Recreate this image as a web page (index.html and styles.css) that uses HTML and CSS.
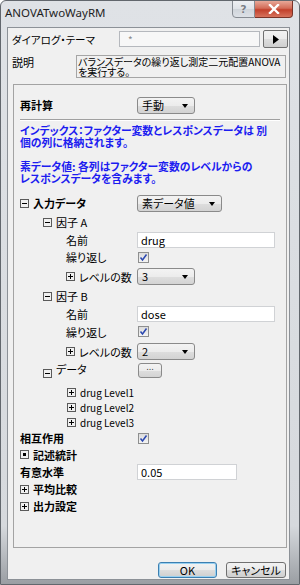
FILE: index.html
```html
<!DOCTYPE html>
<html lang="ja">
<head>
  <meta charset="UTF-8">
  <meta name="viewport" content="width=device-width, initial-scale=1.0">
  <title>ANOVATwoWayRM</title>
  <link rel="stylesheet" href="styles.css">
</head>
<body>
  <div class="window">
    <div class="titlebar">
      <span class="title">ANOVATwoWayRM</span>
      <div class="caption-buttons">
        <span class="cap-btn help">?</span>
        <span class="cap-btn close">
          <svg width="12" height="10" viewBox="0 0 12 10"><path d="M2 1 L10 9 M10 1 L2 9" stroke="#fff" stroke-width="2.4" stroke-linecap="square"/></svg>
        </span>
      </div>
    </div>

    <div class="client">
      <div class="theme-row">
        <span class="theme-label">ダイアログ・テーマ</span>
        <div class="theme-input">*</div>
        <button class="theme-btn">
          <svg width="8" height="9" viewBox="0 0 8 9"><path d="M1 0 L7 4.5 L1 9 Z" fill="#000"/></svg>
        </button>
      </div>

      <div class="desc-row">
        <span class="desc-label">説明</span>
        <div class="desc-box">バランスデータの繰り返し測定二元配置ANOVA<br>を実行する。</div>
      </div>

      <div class="panel">
        <div class="prop-row recalc">
          <span class="lbl lvl0 bold">再計算</span>
          <div class="ctl"><div class="combo w58">手動<i class="arrow"></i></div></div>
        </div>
        <div class="sep"></div>
        <p class="note">インデックス：ファクター変数とレスポンスデータは 別<br>個の列に格納されます。<br><br>素データ値: 各列はファクター変数のレベルからの<br>レスポンスデータを含みます。</p>

        <div class="tree">
          <span class="lbl lvl0 bold"><i class="tw minus"></i>入力データ</span>
          <div class="ctl"><div class="combo w85">素データ値<i class="arrow"></i></div></div>

          <span class="lbl lvl1"><i class="tw minus"></i>因子 A</span>
          <div class="ctl"></div>

          <span class="lbl lvl2">名前</span>
          <div class="ctl"><div class="textbox w138">drug</div></div>

          <span class="lbl lvl2">繰り返し</span>
          <div class="ctl"><span class="check"><svg width="9" height="9" viewBox="0 0 9 9"><path d="M1.5 4.5 L3.5 7 L7.5 1.5" fill="none" stroke="#2b48b0" stroke-width="1.5"/></svg></span></div>

          <span class="lbl lvl2"><i class="tw plus"></i>レベルの数</span>
          <div class="ctl"><div class="combo w58">3<i class="arrow"></i></div></div>

          <span class="lbl lvl1"><i class="tw minus"></i>因子 B</span>
          <div class="ctl"></div>

          <span class="lbl lvl2">名前</span>
          <div class="ctl"><div class="textbox w138">dose</div></div>

          <span class="lbl lvl2">繰り返し</span>
          <div class="ctl"><span class="check"><svg width="9" height="9" viewBox="0 0 9 9"><path d="M1.5 4.5 L3.5 7 L7.5 1.5" fill="none" stroke="#2b48b0" stroke-width="1.5"/></svg></span></div>

          <span class="lbl lvl2"><i class="tw plus"></i>レベルの数</span>
          <div class="ctl"><div class="combo w58">2<i class="arrow"></i></div></div>

          <span class="lbl lvl1"><i class="tw minus"></i><span class="raise">データ</span></span>
          <div class="ctl"><button class="ellipsis">...</button></div>

          <span class="lbl leaf"><i class="tw plus"></i>drug Level1</span>
          <div class="ctl"></div>

          <span class="lbl leaf"><i class="tw plus"></i>drug Level2</span>
          <div class="ctl"></div>

          <span class="lbl leaf"><i class="tw plus"></i>drug Level3</span>
          <div class="ctl"></div>

          <span class="lbl lvl0 bold">相互作用</span>
          <div class="ctl"><span class="check"><svg width="9" height="9" viewBox="0 0 9 9"><path d="M1.5 4.5 L3.5 7 L7.5 1.5" fill="none" stroke="#2b48b0" stroke-width="1.5"/></svg></span></div>

          <span class="lbl lvl0 bold"><i class="tw dot"></i>記述統計</span>
          <div class="ctl"></div>

          <span class="lbl lvl0 bold">有意水準</span>
          <div class="ctl"><div class="textbox w100">0.05</div></div>

          <span class="lbl lvl0 bold"><i class="tw plus"></i>平均比較</span>
          <div class="ctl"></div>

          <span class="lbl lvl0 bold"><i class="tw plus"></i>出力設定</span>
          <div class="ctl"></div>
        </div>
      </div>

      <div class="dialog-buttons">
        <button class="btn default">OK</button>
        <button class="btn">キャンセル</button>
      </div>
    </div>
  </div>
</body>
</html>
```

FILE: styles.css
```css
body {
  margin: 0;
  background-color: #fff;
  font-family: "Noto Sans CJK JP", sans-serif;
  font-size: 11px;
  font-feature-settings: "palt";
  color: #000;
}
.window {
  width: 300px;
  height: 585px;
  box-sizing: border-box;
  border: 1px solid #62676d;
  border-radius: 6px 6px 0 0;
  background: linear-gradient(#dfe2e6, #d6d9dd 90%, #9a9ea3);
  display: flex;
  flex-direction: column;
  overflow: hidden;
}
.titlebar {
  height: 26px;
  display: flex;
  justify-content: space-between;
  align-items: flex-start;
  padding: 0 6px 0 4px;
}
.title {
  font-family: "Noto Sans", sans-serif;
  font-size: 11.5px;
  line-height: 24px;
  color: #1e1e1e;
}
.caption-buttons {
  display: flex;
  margin-top: -1px;
}
.cap-btn {
  height: 18px;
  box-sizing: border-box;
  display: flex;
  align-items: center;
  justify-content: center;
}
.help {
  width: 23px;
  border: 1px solid #868b92;
  border-radius: 0 0 0 4px;
  background: linear-gradient(#eef0f3, #dfe3e8 50%, #cfd4da 51%, #dde1e6);
  color: #7a7f86;
  font-family: "DejaVu Sans", sans-serif;
  font-weight: bold;
  font-size: 11px;
  text-shadow: 0 0 1px #fff;
}
.close {
  width: 38px;
  border: 1px solid #7a3327;
  border-left: none;
  border-radius: 0 0 4px 0;
  background: linear-gradient(#e8a898, #d36c58 45%, #c2402b 55%, #d7735d);
}
.client {
  flex: 1;
  margin: 0 9px 4px 6px;
  border: 1px solid #8c9197;
  background-color: #f0f0f0;
  display: flex;
  flex-direction: column;
  overflow: hidden;
}
.theme-row {
  display: flex;
  align-items: center;
  height: 18px;
  margin-top: 2px;
}
.theme-label {
  width: 107px;
  padding-left: 4px;
  font-size: 10.5px;
  white-space: nowrap;
}
.theme-input {
  width: 141px;
  height: 16px;
  box-sizing: border-box;
  border: 1px solid #b5b8bd;
  background-color: #f7f7f7;
  color: #8a8a8a;
  padding-left: 8px;
  line-height: 16px;
  font-size: 10px;
}
.theme-btn {
  width: 25px;
  height: 18px;
  margin-left: 3px;
  padding: 0;
  border: 1px solid #707070;
  border-radius: 2px;
  background: linear-gradient(#f2f2f2, #ebebeb 50%, #dddddd 51%, #cfcfcf);
  display: flex;
  align-items: center;
  justify-content: center;
}
.desc-row {
  display: flex;
  margin-top: 7px;
}
.desc-label {
  width: 64px;
  padding: 2px 0 0 4px;
  line-height: 10px;
}
.desc-box {
  width: 210px;
  height: 23px;
  box-sizing: border-box;
  border: 1px solid #a5a5a5;
  padding: 1px 0 0 1px;
  font-size: 10px;
  line-height: 10px;
  white-space: nowrap;
  overflow: hidden;
}
.panel {
  height: 464px;
  box-sizing: border-box;
  margin: 6px 2px 0 5px;
  border: 1px solid #a3a3a3;
}
.prop-row, .tree {
  display: grid;
  grid-template-columns: 123px 1fr;
}
.recalc {
  height: 18px;
  margin-top: 11px;
  align-items: center;
}
.sep {
  height: 0;
  margin: 5px 6px 0;
  border-top: 1px solid #a0a0a0;
  border-bottom: 1px solid #fff;
}
.note {
  margin: 3px 6px 0;
  font-size: 10.8px;
  line-height: 12px;
  color: #1c1cf0;
  font-weight: bold;
  white-space: nowrap;
}
.tree {
  margin-top: 9px;
  grid-template-rows: 20px 18px 17px 18px 21px 18px 17px 19px 21px 22px 16px 15px 15px 16px 17px 17px 18px 16px;
}
.lbl {
  display: flex;
  align-items: center;
  white-space: nowrap;
}
.ctl {
  display: flex;
  align-items: center;
}
.bold {
  font-weight: bold;
}
.lvl0 { padding-left: 6px; }
.lvl1 { padding-left: 29px; }
.lvl2 { padding-left: 52px; }
.leaf {
  padding-left: 53px;
  font-size: 10px;
}
.raise {
  margin-bottom: 8px;
}
.tw {
  width: 9px;
  height: 9px;
  box-sizing: border-box;
  border: 1px solid #5a5a5a;
  margin-right: 4px;
  position: relative;
  flex: none;
}
.tw::before, .tw::after {
  content: "";
  position: absolute;
  background-color: #000;
}
.tw::before {
  left: 1px;
  top: 3px;
  width: 5px;
  height: 1px;
}
.tw.plus::after {
  left: 3px;
  top: 1px;
  width: 1px;
  height: 5px;
}
.tw.dot::before {
  left: 2px;
  top: 2px;
  width: 3px;
  height: 3px;
}
.tw.minus::after {
  display: none;
}
.combo {
  height: 17px;
  box-sizing: border-box;
  border: 1px solid #8a8a8a;
  border-radius: 3px;
  background: linear-gradient(#f3f3f3, #ececec 50%, #dedede 51%, #d3d3d3);
  padding-left: 4px;
  line-height: 15px;
  position: relative;
}
.arrow {
  position: absolute;
  right: 6px;
  top: 6px;
  border-left: 3.5px solid transparent;
  border-right: 3.5px solid transparent;
  border-top: 4px solid #000;
}
.w58 { width: 58px; }
.w85 { width: 85px; }
.w100 { width: 100px; }
.w138 { width: 138px; }
.textbox {
  height: 16px;
  box-sizing: border-box;
  border: 1px solid #d0d2d5;
  background-color: #fff;
  padding-left: 3px;
  line-height: 14px;
}
.check {
  width: 11px;
  height: 11px;
  box-sizing: border-box;
  margin-left: 1px;
  border: 1px solid #8e8f8f;
  background: linear-gradient(#dcdcdc, #f4f4f4);
  display: flex;
  align-items: center;
  justify-content: center;
}
.ellipsis {
  width: 24px;
  height: 15px;
  margin-left: 1px;
  margin-top: -6px;
  padding: 0 0 4px;
  border: 1px solid #8a8a8a;
  border-radius: 3px;
  background: linear-gradient(#f3f3f3, #ececec 50%, #dedede 51%, #d3d3d3);
  font-family: "DejaVu Sans", sans-serif;
  font-size: 8px;
  line-height: 8px;
  color: #333;
}
.dialog-buttons {
  display: flex;
  justify-content: flex-end;
  gap: 9px;
  margin-top: 14px;
  padding-right: 3px;
}
.btn {
  width: 60px;
  height: 16px;
  padding: 0;
  border: 1px solid #707070;
  border-radius: 3px;
  background: linear-gradient(#f2f2f2, #ebebeb 50%, #dddddd 51%, #cfcfcf);
  font-family: "Noto Sans CJK JP", sans-serif;
  font-feature-settings: "palt";
  font-size: 11px;
  line-height: 14px;
  color: #000;
}
.btn.default {
  width: 59px;
  border-color: #3c7fb1;
  box-shadow: inset 0 0 0 1px #98d0f0;
}
```
